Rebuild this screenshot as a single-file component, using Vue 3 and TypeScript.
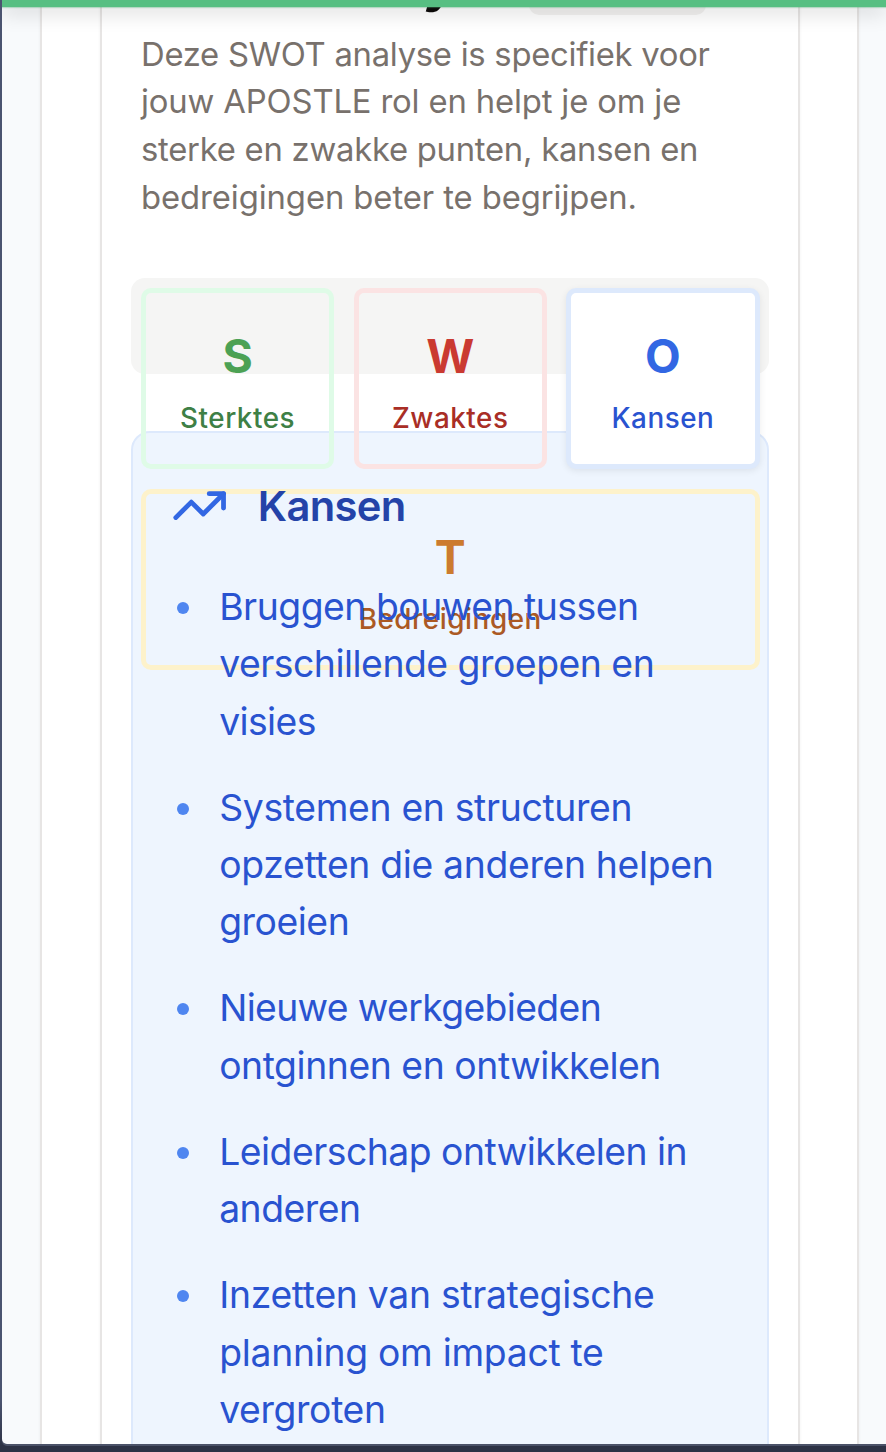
<script setup lang="ts">
interface Line {
  text: string
  tracking: number
}

interface Tab {
  letter: string
  label: string
  tone: 'green' | 'red' | 'blue' | 'amber'
  active?: boolean
}

const intro: Line[] = [
  { text: 'Deze SWOT analyse is specifiek voor', tracking: -0.27 },
  { text: 'jouw APOSTLE rol en helpt je om je', tracking: -0.15 },
  { text: 'sterke en zwakke punten, kansen en', tracking: -0.25 },
  { text: 'bedreigingen beter te begrijpen.', tracking: -0.08 },
]

const tabs: Tab[] = [
  { letter: 'S', label: 'Sterktes', tone: 'green' },
  { letter: 'W', label: 'Zwaktes', tone: 'red' },
  { letter: 'O', label: 'Kansen', tone: 'blue', active: true },
  { letter: 'T', label: 'Bedreigingen', tone: 'amber' },
]

const items: Line[][] = [
  [
    { text: 'Bruggen bouwen tussen', tracking: -0.47 },
    { text: 'verschillende groepen en', tracking: -0.47 },
    { text: 'visies', tracking: -0.6 },
  ],
  [
    { text: 'Systemen en structuren', tracking: -0.32 },
    { text: 'opzetten die anderen helpen', tracking: -0.31 },
    { text: 'groeien', tracking: -0.45 },
  ],
  [
    { text: 'Nieuwe werkgebieden', tracking: -0.62 },
    { text: 'ontginnen en ontwikkelen', tracking: -0.43 },
  ],
  [
    { text: 'Leiderschap ontwikkelen in', tracking: -0.49 },
    { text: 'anderen', tracking: -0.5 },
  ],
  [
    { text: 'Inzetten van strategische', tracking: -0.29 },
    { text: 'planning om impact te', tracking: -0.28 },
    { text: 'vergroten', tracking: -0.35 },
  ],
]
</script>

<template>
  <div class="window">
    <div class="viewport">
      <div class="topbar"></div>
      <main class="outer-card">
        <section class="inner-card">
          <header class="title-row">
            <h2 class="title">SWOT Analyse</h2>
            <span class="badge"></span>
          </header>
          <p class="intro">
            <span
              v-for="line in intro"
              :key="line.text"
              class="line"
              :style="{ letterSpacing: `${line.tracking}px` }"
            >{{ line.text }}</span>
          </p>
          <div class="tabs">
            <button
              v-for="tab in tabs"
              :key="tab.letter"
              type="button"
              class="tab"
              :class="[tab.tone, { active: tab.active }]"
            >
              <span class="letter">{{ tab.letter }}</span>
              <span class="label">{{ tab.label }}</span>
            </button>
          </div>
          <article class="panel">
            <h3 class="panel-title">
              <svg class="trend" viewBox="0 0 24 24" aria-hidden="true">
                <polyline points="22 7 13.5 15.5 8.5 10.5 2 17" />
                <polyline points="16 7 22 7 22 13" />
              </svg>
              <span>Kansen</span>
            </h3>
            <ul class="list">
              <li v-for="(item, i) in items" :key="i" class="item">
                <span class="dot"></span>
                <span class="text">
                  <span
                    v-for="line in item"
                    :key="line.text"
                    class="line"
                    :style="{ letterSpacing: `${line.tracking}px` }"
                  >{{ line.text }}</span>
                </span>
              </li>
            </ul>
          </article>
        </section>
      </main>
    </div>
  </div>
</template>

<style>
body {
  margin: 0;
  overflow: hidden;
}
</style>

<style scoped>
.window {
  box-sizing: border-box;
  width: 886px;
  height: 1452px;
  padding: 0 0 8px 2px;
  overflow: hidden;
  background: linear-gradient(#4b5470 0, #4b5470 1400px, #2d3245 1446px);
  font-family: Inter, "Liberation Sans", sans-serif;
}

.viewport {
  position: relative;
  box-sizing: border-box;
  height: 1444px;
  padding: 0 27px 0 38.4px;
  overflow: hidden;
  background: #f8fafc;
  border-bottom-left-radius: 5px;
  box-shadow: 0 2px 0 #4b5268;
}

.topbar {
  position: absolute;
  z-index: 2;
  top: 0;
  left: 0;
  right: 0;
  height: 7px;
  background: #57bf82;
  box-shadow: 0 4px 20px rgba(0, 0, 0, 0.26), 0 1px 1px rgba(87, 191, 130, 0.35);
}

.outer-card {
  box-sizing: border-box;
  height: 1460px;
  padding: 0 57px 0 57.6px;
  background: #fff;
  border: 2px solid #e7e5e4;
  border-top: 0;
  box-shadow: 0 0 3px rgba(0, 0, 0, 0.06);
}

.inner-card {
  box-sizing: border-box;
  height: 1460px;
  padding: 0 29px;
  background: #fff;
  border: 2px solid #e7e5e4;
  border-top: 0;
  box-shadow: 0 0 3px rgba(0, 0, 0, 0.06);
}

.title-row {
  display: flex;
  align-items: flex-end;
  gap: 18px;
  height: 15px;
  margin: 0 0 15.6px 10px;
}

.title {
  width: 370px;
  margin: 0;
  font-size: 55px;
  font-weight: 700;
  line-height: 67px;
  letter-spacing: -2.6px;
  white-space: nowrap;
  color: #0c0a09;
}

.badge {
  width: 177px;
  height: 48px;
  border-radius: 10px;
  background: #f3f2f1;
}

.intro {
  margin: 0 0 56.4px 10px;
  font-size: 32.8px;
  line-height: 47.75px;
  color: #78716c;
}

.line {
  display: block;
  white-space: nowrap;
}

.tabs {
  box-sizing: border-box;
  display: grid;
  grid-template-columns: repeat(3, 1fr);
  grid-auto-rows: 181px;
  gap: 20px 19.5px;
  height: 96px;
  padding: 10px 9.5px 10px 10px;
  border-radius: 14px;
  background: #f5f5f4;
}

.tab {
  display: flex;
  flex-direction: column;
  align-items: center;
  box-sizing: border-box;
  padding: 30.2px 0 0;
  border: 5px solid;
  border-radius: 10px;
  background: transparent;
  font-family: inherit;
}

.tab:last-child {
  grid-column: 1 / -1;
  padding-top: 29.8px;
}

.letter {
  font-size: 46.3px;
  font-weight: 700;
  line-height: 67px;
}

.label {
  margin-top: 8.8px;
  font-size: 27.8px;
  font-weight: 500;
  line-height: 38.2px;
  letter-spacing: 0.55px;
}

.green { border-color: #dffbe7; }
.green .letter { color: #4ca154; }
.green .label { color: #3e8046; }
.red { border-color: #fbe3e3; }
.red .letter { color: #ca3a31; }
.red .label { color: #a92e26; }
.blue { border-color: #dde9fc; }
.blue .letter { color: #3267e3; }
.blue .label { color: #2953d0; }
.amber { border-color: #fdf2cb; }
.amber .letter { color: #cc7b2e; }
.amber .label { color: #ab5924; }

.active {
  background: #fff;
  box-shadow: 0 2px 7px rgba(0, 0, 0, 0.08);
}

.panel {
  box-sizing: border-box;
  height: 1200px;
  margin-top: 57px;
  padding: 39px 38px 38px 38px;
  border: 2px solid #dde9fc;
  border-radius: 19px;
  background: #eef5fe;
}

.panel-title {
  display: flex;
  align-items: center;
  gap: 29.5px;
  height: 67px;
  margin: 0;
  font-size: 41.7px;
  font-weight: 600;
  line-height: 70px;
  letter-spacing: -0.65px;
  color: #2443a8;
}

.panel-title span {
  margin-top: 1px;
}

.trend {
  width: 57.3px;
  height: 57.3px;
  fill: none;
  stroke: #3267e3;
  stroke-width: 2;
  stroke-linecap: round;
  stroke-linejoin: round;
}

.list {
  display: grid;
  gap: 28.7px;
  margin: 39px 0 0;
  padding: 0;
  list-style: none;
}

.item {
  display: flex;
  gap: 30.2px;
  padding-left: 6px;
}

.dot {
  flex: none;
  width: 12px;
  height: 12px;
  margin-top: 23.9px;
  border-radius: 50%;
  background: #4f86f0;
}

.text {
  font-size: 37.3px;
  line-height: 57.35px;
  color: #2953d0;
}
</style>
